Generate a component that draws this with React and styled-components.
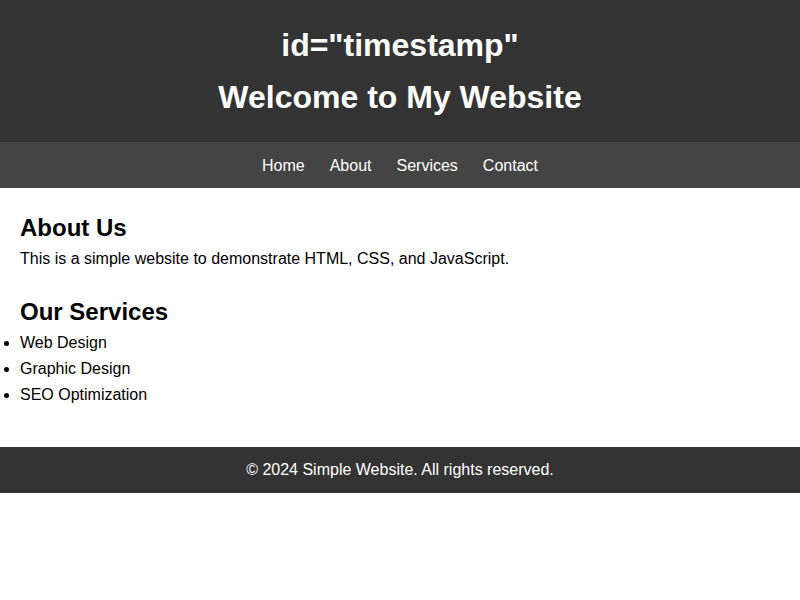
import React from "react";
import styled, { createGlobalStyle } from "styled-components";

const GlobalStyle = createGlobalStyle`
  body {
    margin: 0;
    font-family: "Liberation Sans", Arial, sans-serif;
    background: #fff;
    color: #000;
  }
`;

const Header = styled.header`
  background: #333;
  color: #fff;
  text-align: center;
  padding: 27px 0 26px;
`;

const Title = styled.h1`
  margin: ${(p) => (p.$first ? "0 0 15px" : "0")};
  font-size: 32px;
  line-height: 37px;
  font-weight: bold;
`;

const Nav = styled.nav`
  background: #444;
  display: flex;
  justify-content: center;
  gap: 25px;
  padding: 15px 0 13px;
`;

const NavLink = styled.a`
  color: #fff;
  text-decoration: none;
  font-size: 16px;
  line-height: 18px;
`;

const Main = styled.main`
  padding: 26px 20px 43px;
`;

const Section = styled.section`
  margin-bottom: ${(p) => (p.$last ? "0" : "30px")};
`;

const Heading = styled.h2`
  margin: 0 0 8px;
  font-size: 24px;
  line-height: 28px;
  font-weight: bold;
`;

const Text = styled.p`
  margin: 0;
  font-size: 16px;
  line-height: 18px;
`;

const List = styled.ul`
  margin: 0;
  padding: 0;
  list-style: disc outside;
  display: flex;
  flex-direction: column;
  gap: 8px;
`;

const Item = styled.li`
  font-size: 16px;
  line-height: 18px;
`;

const Footer = styled.footer`
  background: #333;
  color: #fff;
  text-align: center;
  padding: 14px 0;
  font-size: 16px;
  line-height: 18px;
`;

const links = ["Home", "About", "Services", "Contact"];
const services = ["Web Design", "Graphic Design", "SEO Optimization"];

export default function App() {
  return (
    <>
      <GlobalStyle />
      <Header>
        <Title $first>id="timestamp"</Title>
        <Title>Welcome to My Website</Title>
      </Header>
      <Nav>
        {links.map((l) => (
          <NavLink key={l} href={"#" + l.toLowerCase()}>{l}</NavLink>
        ))}
      </Nav>
      <Main>
        <Section>
          <Heading>About Us</Heading>
          <Text>This is a simple website to demonstrate HTML, CSS, and JavaScript.</Text>
        </Section>
        <Section $last>
          <Heading>Our Services</Heading>
          <List>
            {services.map((s) => (
              <Item key={s}>{s}</Item>
            ))}
          </List>
        </Section>
      </Main>
      <Footer>© 2024 Simple Website. All rights reserved.</Footer>
    </>
  );
}
